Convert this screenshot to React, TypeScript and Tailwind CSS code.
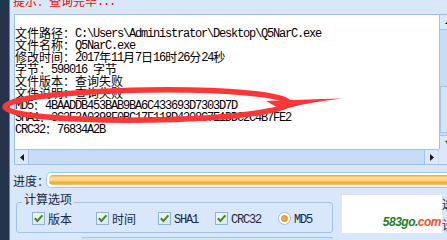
import React from "react";

const ascii = /^[\x20-\x7e]+$/;

// CJK glyphs at 12px, ASCII runs in a 6px-wide mono like the old SimSun look
function Mixed({ text }: { text: string }) {
  return (
    <>
      {text.split(/([\x20-\x7e]+)/).map((part, i) =>
        !part ? null : ascii.test(part) ? (
          <span
            key={i}
            className="font-['Liberation_Mono',monospace] text-[12px] tracking-[-1.2px] align-[1px]"
          >
            {part}
          </span>
        ) : (
          <span key={i}>{part}</span>
        )
      )}
    </>
  );
}

const lines = [
  "文件路径：C:\\Users\\Administrator\\Desktop\\Q5NarC.exe",
  "文件名称：Q5NarC.exe",
  "修改时间：2017年11月7日16时26分24秒",
  "字节：598016 字节",
  "文件版本：查询失败",
  "文件说明：查询失败",
  "MD5：4BAADDB453BAB9BA6C433693D7303D7D",
  "SHA1：3C2E2A0398F0BC17F118D4208C7E1DDC2C4B7FE2",
  "CRC32：76834A2B",
];

const options = [
  { label: "版本", w: "w-[64px]" },
  { label: "时间", w: "w-[62px]" },
  { label: "SHA1", w: "w-[57px]" },
  { label: "CRC32", w: "w-[63px]" },
];

function Arrow({ dir }: { dir: "up" | "down" | "left" | "right" }) {
  const pts = {
    up: "0,4 3.5,0 7,4",
    down: "0,0 3.5,4 7,0",
    left: "4,0 0,3.5 4,7",
    right: "0,0 4,3.5 0,7",
  }[dir];
  const vertical = dir === "up" || dir === "down";
  return (
    <svg width={vertical ? 7 : 4} height={vertical ? 4 : 7} viewBox={vertical ? "0 0 7 4" : "0 0 4 7"}>
      <polygon points={pts} fill="#111827" />
    </svg>
  );
}

function Check() {
  return (
    <span className="w-[13px] h-[13px] shrink-0 border border-[#8fb3df] bg-[linear-gradient(135deg,#f4f8fe,#d6e5f7)] flex items-center justify-center">
      <svg width="11" height="11" viewBox="0 0 11 11">
        <path d="M1.8 5.2 L4.4 8 L9.4 2.4" fill="none" stroke="#4d8a10" strokeWidth="2.1" />
      </svg>
    </span>
  );
}

export default function App() {
  return (
    <div className="relative w-[447px] h-[240px] overflow-hidden flex bg-[#d8e7fa] font-['Noto_Sans_CJK_SC',sans-serif] text-[12px] leading-[12px]">
      {/* desktop edge */}
      <div className="w-[10px] shrink-0 bg-[#24344c] border-r border-[#6f8098]" />

      <div className="flex-1 min-w-0 flex flex-col">
        {/* status line, cut at the top */}
        <div className="h-[16px] pl-[3px]">
          <div className="mt-[-5px] text-[#ff0000] whitespace-pre">
            <Mixed text="提示：查询完毕..." />
          </div>
        </div>

        {/* result text box */}
        <div className="ml-[4px] w-[443px] h-[151px] shrink-0 border border-[#9dc0ea] grid grid-cols-[424px_17px] grid-rows-[134px_15px]">
          <div className="bg-white pt-[12px] text-black overflow-hidden">
            {lines.map((l) => (
              <div key={l} className="h-[12px] whitespace-pre">
                <Mixed text={l} />
              </div>
            ))}
          </div>
          <div className="bg-[#c8dcf5] border-l border-[#a3c3ea] flex flex-col">
            <div className="h-[15px] bg-[#dae8fa] border-b border-[#a3c3ea] flex items-center justify-center">
              <Arrow dir="up" />
            </div>
            <div className="mt-[56px] h-[47px] border border-[#a9c7ec] bg-[#d3e4f8]" />
            <div className="mt-auto h-[14px] bg-[#dae8fa] border-t border-[#a3c3ea] flex items-center justify-center">
              <Arrow dir="down" />
            </div>
          </div>
          <div className="bg-[#c8dcf5] border-t border-[#a3c3ea] flex">
            <div className="w-[14px] bg-[#dae8fa] border-r border-[#a3c3ea] flex items-center justify-center">
              <Arrow dir="left" />
            </div>
            <div className="flex-1" />
            <div className="w-[14px] mr-[1px] bg-[#dae8fa] border-l border-[#a3c3ea] flex items-center justify-center">
              <Arrow dir="right" />
            </div>
          </div>
          <div className="bg-[#dae8f9]" />
        </div>

        {/* progress */}
        <div className="mt-[7px] h-[16px] shrink-0 flex items-start">
          <div className="w-[36px] shrink-0 pl-[3px] mt-[3px] whitespace-pre text-[#1c2740]">进度：</div>
          <div className="w-[410px] shrink-0 h-[16px] border border-[#a9c7ec] rounded-[5px] bg-white p-[2px]">
            <div className="h-full rounded-[4px] bg-[linear-gradient(to_bottom,#f0a03a_0%,#ffe39a_28%,#ffd470_55%,#f2a23a_78%,#f8c57a_100%)]" />
          </div>
        </div>

        {/* options */}
        <div className="mt-[5px] flex items-start shrink-0">
          <div className="ml-[6px] w-[317px] shrink-0">
            <fieldset className="border border-[#9fc2ea] rounded-[3px] px-0 pt-[1px] pb-[7px]">
              <legend className="ml-[5px] px-[2px] pb-[6px] leading-[12px] text-[#1c2740]">计算选项</legend>
              <div className="pl-[15px] h-[13px] flex items-center text-[#1c2740]">
                {options.map((o) => (
                  <div key={o.label} className={`${o.w} shrink-0 flex items-center`}>
                    <Check />
                    <span className="ml-[3px] h-[12px] whitespace-pre">
                      <Mixed text={o.label} />
                    </span>
                  </div>
                ))}
                <div className="flex items-center">
                  <span className="w-[13px] h-[13px] rounded-full border border-[#9dbde6] bg-white flex items-center justify-center">
                    <span className="w-[7px] h-[7px] rounded-full bg-[#f5a733] border border-[#e08d1a]" />
                  </span>
                  <span className="ml-[3px] h-[12px] whitespace-pre">
                    <Mixed text="MD5" />
                  </span>
                </div>
              </div>
            </fieldset>
            <div className="ml-[66px] w-[251px] mt-[4px] h-[3px] border-t border-[#a6c5ec] bg-[#d0e2f7]" />
          </div>

          <div className="ml-[9px] mt-[2px] w-[100px] h-[38px] shrink-0 bg-white flex items-end justify-end pr-[1px] pb-[5px]">
            <span className="font-['Liberation_Sans',Arial,sans-serif] font-bold italic text-[12px] leading-[12px] tracking-[-0.5px]">
              <span className="text-[#1f7d2c]">583go.</span>
              <span className="text-[#f0532a]">com</span>
            </span>
          </div>

          <div className="shrink-0 leading-[21px] text-[#1c2740]">
            <div>选</div>
            <div>设</div>
          </div>
        </div>
      </div>

      {/* red hand-drawn mark around the MD5 line */}
      <svg
        className="absolute left-0 top-0 pointer-events-none"
        width="447"
        height="240"
        viewBox="0 0 447 240"
      >
        <ellipse
          cx="147"
          cy="105"
          rx="142"
          ry="15"
          fill="none"
          stroke="#ff3636"
          strokeWidth="5.5"
          transform="rotate(-0.8 147 105)"
        />
        <path d="M266 101 Q300 99.5 342 98.5 Q302 103 282 110 Z" fill="#ff3636" />
      </svg>
    </div>
  );
}
